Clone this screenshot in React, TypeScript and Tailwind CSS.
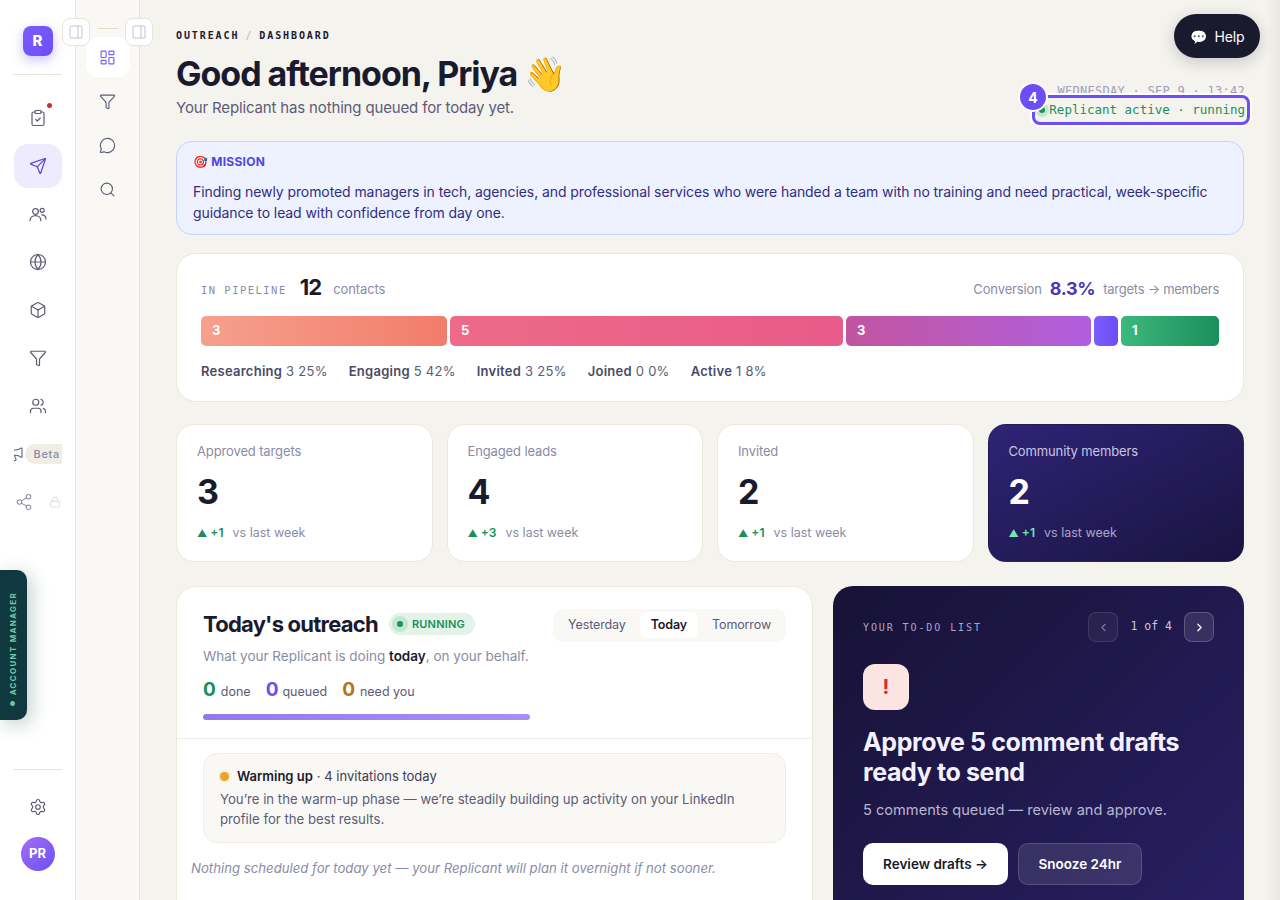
import { FC, ReactNode } from "react"
import {
  Box,
  ChevronLeft,
  ChevronRight,
  ClipboardCheck,
  Filter,
  Globe,
  LayoutDashboard,
  Lock,
  Megaphone,
  MessageCircle,
  PanelRight,
  Search,
  Send,
  Settings,
  Share2,
  Users,
} from "lucide-react"

const inter = "font-['Inter',sans-serif]"
const mono = "font-['DejaVu_Sans_Mono','Liberation_Mono',monospace]"

const RailItem: FC<{ active?: boolean; children: ReactNode }> = ({ active, children }) => (
  <div
    className={`relative flex h-[44px] w-[48px] shrink-0 items-center justify-center rounded-[14px] ${
      active ? "bg-[#efebff] text-[#5b45c9]" : "text-[#5c5c78]"
    }`}
  >
    {children}
  </div>
)

const TwoHeads: FC = () => (
  <svg width="20" height="20" viewBox="0 0 24 24" fill="none" stroke="currentColor" strokeWidth="1.5" strokeLinecap="round" strokeLinejoin="round">
    <circle cx="9" cy="9" r="3.4" />
    <circle cx="17" cy="7.5" r="2.4" />
    <path d="M2.5 20c0-3.6 2.9-6 6.5-6s6.5 2.4 6.5 6" />
    <path d="M16.5 13c3 0 5 2.2 5 5" />
  </svg>
)

const Rail: FC = () => (
  <aside className="relative flex h-full w-[76px] shrink-0 flex-col items-center border-r border-[#e8e4d9] bg-white pt-[26px]">
    <div className="flex h-[30px] w-[30px] items-center justify-center rounded-[8px] bg-gradient-to-br from-[#7c5cfc] to-[#6c4ef5] text-[15px] font-extrabold text-white shadow-[0_4px_12px_rgba(108,78,245,0.35)]">
      R
    </div>
    <div className="mt-[18px] h-px w-[49px] bg-[#e8e4d9]" />
    <div className="mt-[21px] flex flex-col items-center gap-[4px]">
      <RailItem>
        <ClipboardCheck size={18} strokeWidth={1.6} />
        <span className="absolute right-[10px] top-[7px] h-[5px] w-[5px] rounded-full bg-[#c9302c]" />
      </RailItem>
      <RailItem active>
        <Send size={18} strokeWidth={1.6} />
      </RailItem>
      <RailItem>
        <TwoHeads />
      </RailItem>
      <RailItem>
        <Globe size={18} strokeWidth={1.6} />
      </RailItem>
      <RailItem>
        <Box size={18} strokeWidth={1.6} />
      </RailItem>
      <RailItem>
        <Filter size={18} strokeWidth={1.6} />
      </RailItem>
      <RailItem>
        <Users size={18} strokeWidth={1.6} />
      </RailItem>
      <div className="flex h-[44px] w-[48px] items-center overflow-hidden">
        <Megaphone size={16} strokeWidth={1.6} className="-ml-[6px] shrink-0 text-[#5c5c78]" />
        <span className="ml-[1px] shrink-0 rounded-full bg-[#f0ede5] px-[9px] py-[2px] text-[11px] font-medium leading-[16px] tracking-[0.06em] text-[#8b8ba7]">
          Beta
        </span>
      </div>
      <div className="flex h-[44px] w-[48px] items-center justify-between pl-[1px]">
        <Share2 size={18} strokeWidth={1.4} className="text-[#8b8ba7]" />
        <Lock size={12} strokeWidth={1.6} className="mr-[1px] text-[#d5d3de]" />
      </div>
    </div>
    <div className="mt-auto h-px w-[49px] bg-[#e8e4d9]" />
    <div className="mt-[15px]">
      <RailItem>
        <Settings size={18} strokeWidth={1.6} />
      </RailItem>
    </div>
    <div className="mb-[29px] mt-[8px] flex h-[34px] w-[34px] items-center justify-center rounded-full bg-gradient-to-br from-[#a56cf5] to-[#6c4ef5] text-[13px] font-bold text-white">
      PR
    </div>
    <div className="absolute left-0 top-[570px] flex h-[150px] w-[27px] items-center justify-center rounded-r-[10px] bg-[#10393f] shadow-[4px_4px_18px_rgba(16,57,63,0.25)]">
      <span className="mr-[1px] mt-[8px] rotate-180 whitespace-nowrap text-[8px] font-bold tracking-[0.16em] text-[#6fc9a8] [writing-mode:vertical-rl]">
        <span className="text-[6px]">●</span> ACCOUNT MANAGER
      </span>
    </div>
  </aside>
)

const SubRail: FC = () => (
  <aside className="flex h-full w-[64px] shrink-0 flex-col items-center border-r border-[#e8e4d9] bg-[#f9f8f4] pt-[28px] text-[#5c5c78]">
    <div className="h-px w-[20px] bg-[#e0dcc8]" />
    <div className="mt-[8px] flex h-[40px] w-[44px] items-center justify-center rounded-[12px] bg-white text-[#7c5cfc]">
      <LayoutDashboard size={17} strokeWidth={1.6} />
    </div>
    <div className="mt-[4px] flex h-[40px] items-center">
      <Filter size={17} strokeWidth={1.6} />
    </div>
    <div className="mt-[4px] flex h-[40px] items-center">
      <MessageCircle size={17} strokeWidth={1.6} />
    </div>
    <div className="mt-[4px] flex h-[40px] items-center">
      <Search size={17} strokeWidth={1.6} />
    </div>
  </aside>
)

const Toggle: FC<{ className: string }> = ({ className }) => (
  <div
    className={`absolute top-[18px] z-10 flex h-[28px] w-[28px] items-center justify-center rounded-[8px] border border-[#e8e4d9] bg-white text-[#c3c6d6] ${className}`}
  >
    <PanelRight size={16} strokeWidth={1.6} />
  </div>
)

const Stat: FC<{ label: string; value: string; delta: string; dark?: boolean }> = ({ label, value, delta, dark }) => (
  <div
    className={`flex h-[138px] flex-col rounded-[18px] border px-[20px] pt-[18px] ${
      dark
        ? "border-transparent bg-gradient-to-br from-[#2f2376] to-[#1a1440] text-white"
        : "border-[#ece8dc] bg-white text-[#1a1a2e]"
    }`}
  >
    <div className={`text-[13px] leading-[16px] tracking-[-0.01em] ${dark ? "text-[#c9c6e0]" : "text-[#8b8ba7]"}`}>{label}</div>
    <div className="mt-[13px] text-[34px] font-bold leading-[40px]">{value}</div>
    <div className="mt-[13px] flex items-center text-[12.5px] leading-[16px]">
      <span className={`text-[12px] font-semibold ${dark ? "text-[#6ee7b7]" : "text-[#1a8f5c]"}`}>
        <span className="mr-[3px] text-[10px]">▲</span>
        {delta}
      </span>
      <span className={`ml-[9px] ${dark ? "text-[#a9a6c8]" : "text-[#8b8ba7]"}`}>vs last week</span>
    </div>
  </div>
)

const Legend: FC<{ name: string; rest: string }> = ({ name, rest }) => (
  <span className="text-[13px] leading-[16px] tracking-[0.02em] text-[#5c5c78]">
    <b className="font-semibold text-[#4a4a68]">{name}</b> {rest}
  </span>
)

const segments = [
  { w: "w-[246px]", cls: "from-[#f5a08d] to-[#f27c6b]", n: "3" },
  { w: "w-[393px]", cls: "from-[#ee6a87] to-[#e85b8a]", n: "5" },
  { w: "w-[245px]", cls: "from-[#c2549f] to-[#b05edf]", n: "3" },
  { w: "w-[24px]", cls: "from-[#7c5cfc] to-[#6c4ef5]", n: "" },
  { w: "w-[98px]", cls: "from-[#3cb97e] to-[#1a8f5c]", n: "1" },
]

const Pipeline: FC = () => (
  <section className="mt-[18px] h-[149px] rounded-[20px] border border-[#ece8dc] bg-white px-[24px] pt-[18px]">
    <div className="flex h-[32px] items-center">
      <span className={`${mono} mt-[6px] text-[10.5px] tracking-[0.14em] text-[#8b8ba7]`}>IN PIPELINE</span>
      <span className="mb-[2px] ml-[13px] text-[22px] font-bold tracking-[-0.04em] text-[#1a1a2e]">12</span>
      <span className="ml-[12px] mt-[3px] text-[13px] tracking-[-0.01em] text-[#8b8ba7]">contacts</span>
      <span className="ml-auto mt-[3px] text-[13px] tracking-[-0.01em] text-[#8b8ba7]">Conversion</span>
      <span className="ml-[8px] text-[18px] font-bold tracking-[-0.02em] text-[#4a35b5]">8.3%</span>
      <span className="ml-[8px] mt-[3px] text-[13px] tracking-[-0.02em] text-[#8b8ba7]">targets → members</span>
    </div>
    <div className="mt-[12px] flex h-[30px] gap-[3px]">
      {segments.map((s, i) => (
        <div
          key={i}
          className={`${s.w} flex shrink-0 items-center rounded-[5px] bg-gradient-to-r pl-[11px] text-[13px] font-bold text-white ${s.cls}`}
        >
          {s.n}
        </div>
      ))}
    </div>
    <div className="mt-[17px] flex gap-[21px]">
      <Legend name="Researching" rest="3 25%" />
      <Legend name="Engaging" rest="5 42%" />
      <Legend name="Invited" rest="3 25%" />
      <Legend name="Joined" rest="0 0%" />
      <Legend name="Active" rest="1 8%" />
    </div>
  </section>
)

const Outreach: FC = () => (
  <section className="h-[400px] rounded-t-[20px] border border-[#ece8dc] bg-white">
    <div className="relative border-b border-[#f0ede5] px-[26px] pb-[18px] pt-[21px]">
      <div className="flex h-[32px] items-center justify-between">
        <div className="flex items-center">
          <h2 className="text-[22px] font-bold tracking-[-0.035em] text-[#1a1a2e]">Today's outreach</h2>
          <span className="ml-[11px] flex h-[22px] items-center rounded-full bg-[#e3f3ea] pl-[3px] pr-[10px] text-[11px] font-semibold tracking-[0.02em] text-[#1a8f5c]">
            <span className="mr-[4px] flex h-[16px] w-[16px] items-center justify-center rounded-full bg-[#c6e6d4]">
              <span className="h-[6px] w-[6px] rounded-full bg-[#1a8f5c]" />
            </span>
            RUNNING
          </span>
        </div>
        <div className="mt-[2px] flex h-[33px] items-center rounded-[10px] bg-[#f9f8f4] px-[4px] text-[12.5px] tracking-[-0.01em] text-[#5c5c78]">
          <span className="px-[11px]">Yesterday</span>
          <span className="mx-[3px] rounded-[7px] bg-white px-[11px] py-[4px] font-semibold text-[#1a1a2e]">Today</span>
          <span className="px-[11px]">Tomorrow</span>
        </div>
      </div>
      <p className="mt-[6px] text-[13.5px] leading-[20px] text-[#8b8ba7]">
        What your Replicant is doing <b className="font-semibold text-[#1a1a2e]">today</b>, on your behalf.
      </p>
      <div className="mt-[12px] flex items-baseline text-[12.5px] leading-[24px] text-[#5c5c78]">
        <span className="mr-[5px] text-[19px] font-bold text-[#1a8f5c]">0</span>
        done
        <span className="ml-[15px] mr-[4px] text-[19px] font-bold text-[#6c4ef5]">0</span>
        queued
        <span className="ml-[15px] mr-[5px] text-[19px] font-bold text-[#b8731a]">0</span>
        need you
      </div>
      <div className="mt-[10px] h-[6px] w-[327px] rounded-full bg-gradient-to-r from-[#9479ee] to-[#a78ff5]" />
    </div>
    <div className="px-[26px] pt-[14px]">
      <div className="rounded-[14px] border border-[#f0ede5] bg-[#f9f8f4] px-[16px] pb-[13px] pt-[12px]">
        <div className="flex items-center text-[13px] leading-[20px] text-[#1a1a2e]">
          <span className="mr-[8px] h-[9px] w-[9px] rounded-full bg-[#e3a72f] shadow-[0_0_0_2px_#f6edd8]" />
          <b className="font-semibold">Warming up</b>
          <span className="ml-[4px] text-[#3c3c56]">· 4 invitations today</span>
        </div>
        <p className="mt-[3px] text-[13.2px] leading-[20px] text-[#5c5c78]">
          You’re in the warm-up phase — we’re steadily building up activity on your LinkedIn
          <br />
          profile for the best results.
        </p>
      </div>
      <p className="-ml-[12px] mt-[15px] text-[13.2px] italic leading-[20px] text-[#8b8ba7]">
        Nothing scheduled for today yet — your Replicant will plan it overnight if not sooner.
      </p>
    </div>
  </section>
)

const Todo: FC = () => (
  <section className="h-[400px] rounded-t-[20px] bg-gradient-to-br from-[#171236] to-[#2b2068] px-[30px] pt-[26px]">
    <div className="flex h-[30px] items-center">
      <span className={`${mono} text-[10px] tracking-[0.19em] text-[#a9a6c8]`}>YOUR TO-DO LIST</span>
      <div className="ml-auto flex h-[30px] w-[30px] items-center justify-center rounded-[8px] border border-white/10 bg-white/5 text-white/40">
        <ChevronLeft size={13} strokeWidth={2} />
      </div>
      <span className={`${mono} mx-[12px] text-[11.5px] text-[#c9c6e0]`}>1 of 4</span>
      <div className="flex h-[30px] w-[30px] items-center justify-center rounded-[8px] border border-white/20 bg-white/10 text-white">
        <ChevronRight size={13} strokeWidth={2.4} />
      </div>
    </div>
    <div className="mt-[22px] flex h-[46px] w-[46px] items-center justify-center rounded-[12px] bg-[#fbe4e1] text-[20px] font-bold text-[#c9302c]">
      !
    </div>
    <h2 className="mt-[17px] text-[25px] font-bold leading-[30px] tracking-[-0.015em] text-[#f3f1ff]">
      Approve 5 comment drafts
      <br />
      ready to send
    </h2>
    <p className="mt-[13px] text-[14.6px] leading-[20px] text-[#b9b6d2]">5 comments queued — review and approve.</p>
    <div className="mt-[23px] flex gap-[10px]">
      <button className="flex h-[42px] w-[145px] items-center justify-center rounded-[10px] bg-white text-[13.5px] font-semibold text-[#1a1a2e]">
        Review drafts →
      </button>
      <button className="flex h-[42px] w-[124px] items-center justify-center rounded-[10px] border border-white/15 bg-white/10 text-[13.5px] font-semibold text-white">
        Snooze 24hr
      </button>
    </div>
  </section>
)

const App: FC = () => (
  <div className={`${inter} relative flex h-[900px] w-[1280px] overflow-hidden bg-[#f5f3ee]`}>
    <Rail />
    <SubRail />
    <Toggle className="left-[62px]" />
    <Toggle className="left-[125px]" />
    <main className="min-w-0 flex-1 pl-[36px] pr-[36px] pt-[29px]">
      <div className={`${mono} flex items-center text-[10px] font-bold leading-[14px] tracking-[0.19em] text-[#1a1a2e]`}>
        OUTREACH
        <span className="mx-[6px] font-normal text-[#b5b5c8]">/</span>
        DASHBOARD
      </div>
      <h1 className="mt-[9px] text-[34px] font-bold leading-[44px] tracking-[-0.03em] text-[#1a1a2e]">
        Good afternoon, Priya 👋
      </h1>
      <p className="mt-[1px] text-[15px] leading-[22px] tracking-[-0.01em] text-[#5c5c78]">Your Replicant has nothing queued for today yet.</p>
      <section className="mt-[22px] h-[94px] rounded-[16px] border border-[#c7d2fe] bg-[#eef1fe] px-[16px] pt-[11px]">
        <div className="text-[12px] font-bold leading-[18px] tracking-[0.02em] text-[#4f46e5]">🎯 MISSION</div>
        <p className="mt-[10px] text-[14px] leading-[21px] tracking-[-0.006em] text-[#312e81]">
          Finding newly promoted managers in tech, agencies, and professional services who were handed a team with no training and need practical, week-specific guidance to lead with confidence from day one.
        </p>
      </section>
      <Pipeline />
      <div className="mt-[22px] grid grid-cols-4 gap-[14px]">
        <Stat label="Approved targets" value="3" delta="+1" />
        <Stat label="Engaged leads" value="4" delta="+3" />
        <Stat label="Invited" value="2" delta="+1" />
        <Stat label="Community members" value="2" delta="+1" dark />
      </div>
      <div className="mt-[24px] grid grid-cols-[637px_411px] gap-[20px]">
        <Outreach />
        <Todo />
      </div>
    </main>

    {/* tour highlight + help sit over the header */}
    <div className="absolute right-[35px] top-[83px] text-right">
      <div className={`${mono} text-[12px] leading-[17px] tracking-[0.023em] text-[#a0a0b8]`}>WEDNESDAY · SEP 9 · 13:42</div>
    </div>
    <div className="absolute left-[1032px] top-[95px] flex h-[30px] w-[218px] items-center justify-end rounded-[8px] border-[3px] border-[#6c4ef5] pr-[2px] shadow-[0_0_0_2px_white]">
      <span className="absolute left-[0px] top-[5px] flex h-[14px] w-[14px] items-center justify-center rounded-full bg-[#c6e6d4]">
        <span className="h-[6px] w-[6px] rounded-full bg-[#1a8f5c]" />
      </span>
      <span className={`${mono} relative text-[12.5px] font-medium text-[#1a8f5c]`}>Replicant active · running</span>
    </div>
    <div className="absolute left-[1018px] top-[82px] flex h-[30px] w-[30px] items-center justify-center rounded-full border-2 border-white bg-[#6c4ef5] text-[14px] font-bold text-white">
      4
    </div>
    <div className="absolute left-[1174px] top-[14px] flex h-[44px] w-[86px] items-center justify-center gap-[8px] rounded-full bg-[#1a1a2e] text-[14px] tracking-[-0.01em] text-white shadow-[0_4px_16px_rgba(26,26,46,0.2)]">
      <span className="text-[14px]">💬</span>
      Help
    </div>
    <div className="pointer-events-none absolute right-0 top-0 h-full w-[14px] bg-gradient-to-r from-transparent to-black/5" />
  </div>
)

export default App
